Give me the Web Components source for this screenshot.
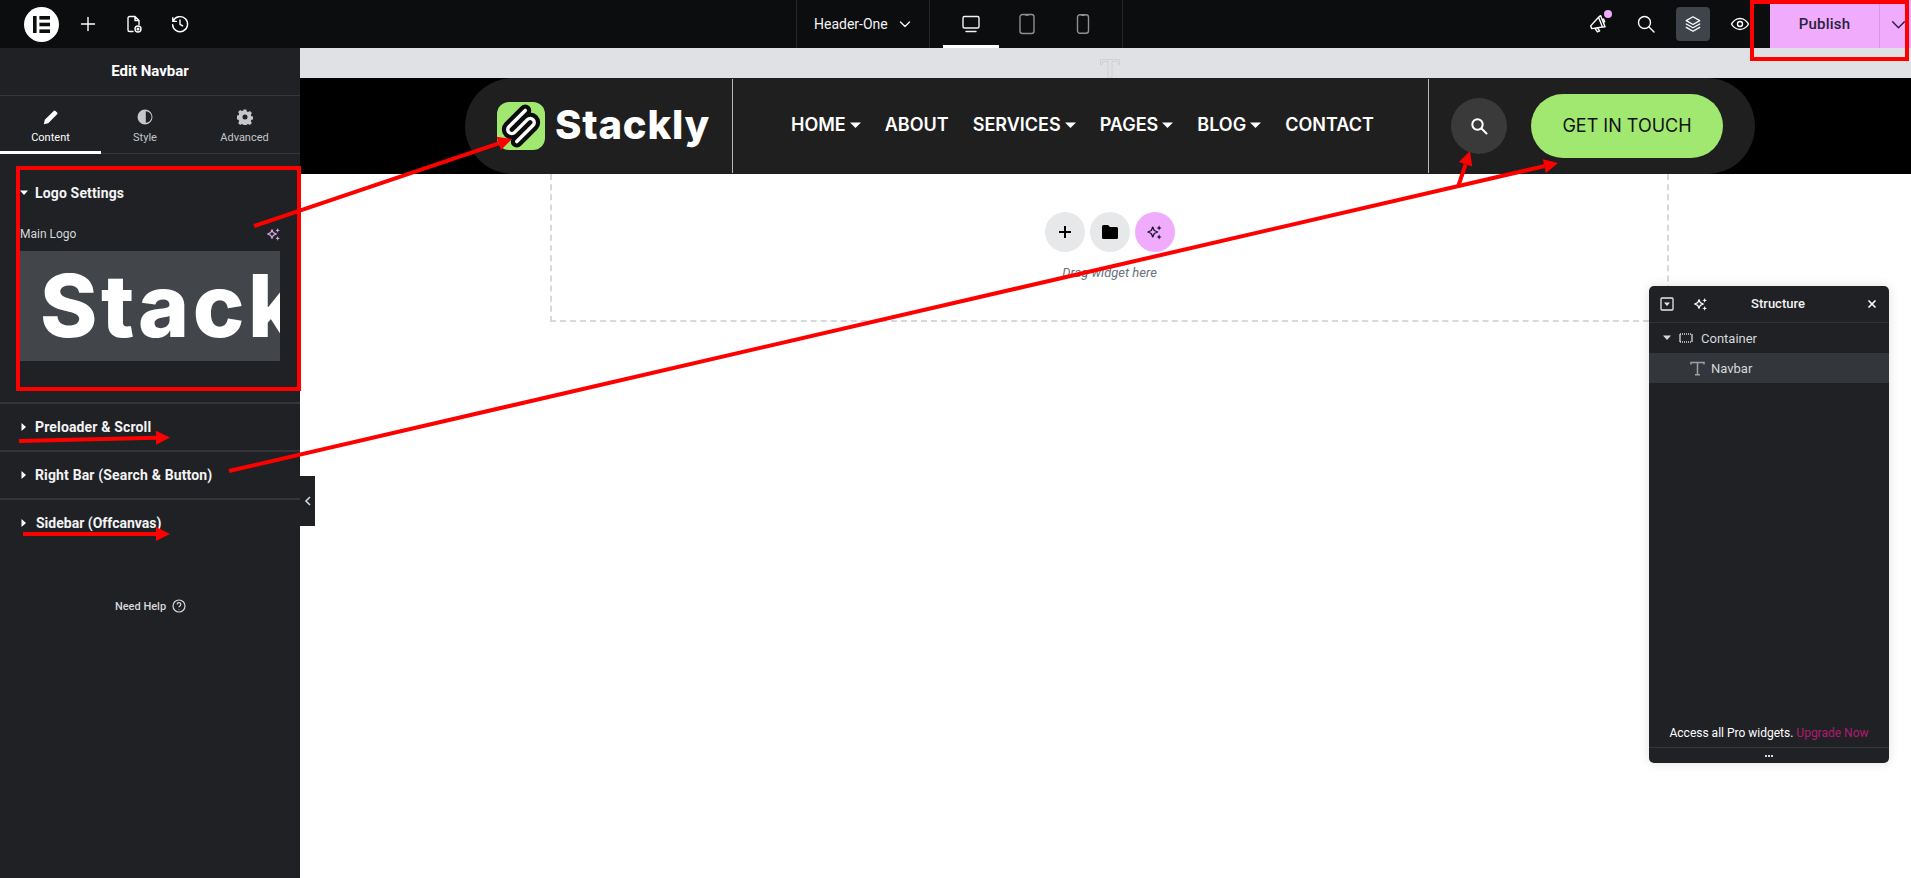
<!DOCTYPE html>
<html>
<head>
<meta charset="utf-8">
<title>Edit Navbar</title>
<style>
  html, body { margin: 0; height: 100%; overflow: hidden; background: #fff; font-family: Roboto, sans-serif; }
  .page { position: relative; width: 1911px; height: 878px; display: flex; flex-direction: column; }
  .main { flex: 1; display: flex; min-height: 0; }
</style>
</head>
<body>
<div class="page">
  <top-bar></top-bar>
  <div class="main">
    <edit-panel>
      <panel-section open label="Logo Settings"><logo-control></logo-control></panel-section>
      <panel-section label="Preloader &amp; Scroll"></panel-section>
      <panel-section label="Right Bar (Search &amp; Button)"></panel-section>
      <panel-section last label="Sidebar (Offcanvas)"></panel-section>
    </edit-panel>
    <canvas-area>
      <site-navbar></site-navbar>
      <drop-zone></drop-zone>
    </canvas-area>
  </div>
  <structure-panel></structure-panel>
  <red-notes></red-notes>
</div>

<script>
const sparkle = `<path d="M9 5.500 11 10l4.500 2-4.500 2-2 4.500L7 14l-4.500-2L7 10z" fill="none" stroke="currentColor" stroke-width="1.800" stroke-linejoin="round"/><path d="M17.500 3l1 2.500 2.500 1-2.500 1-1 2.500-1-2.500-2.500-1 2.500-1zM17.500 15l1 2.500 2.500 1-2.500 1-1 2.500-1-2.500-2.500-1 2.500-1z" fill="currentColor"/>`

customElements.define('top-bar', class extends HTMLElement {
  constructor () {
    super()
    this.attachShadow({ mode: 'open' })
    this.shadowRoot.innerHTML = `
<style>
  :host { display: flex; height: 48px; flex: none; background: #0c0d0e; color: #fff; font-family: Roboto, sans-serif; position: relative; }
  svg { display: block; fill: none; stroke: currentColor; stroke-width: 1.4; stroke-linecap: round; stroke-linejoin: round; }
  .left { width: 796px; display: flex; align-items: center; padding-left: 24px; box-sizing: border-box; }
  .logo { width: 35px; height: 35px; border-radius: 50%; background: #fff; display: grid; place-items: center; margin-right: 19px; }
  .logo svg { stroke: none; fill: #0c0d0e; }
  .left .ic { width: 20px; margin-right: 26px; }
  .doc { width: 134px; border-left: 1px solid #26282b; border-right: 1px solid #26282b; box-sizing: border-box; display: flex; align-items: center; padding-left: 17px; font-size: 14px; gap: 10px; color: #f3f3f4; }
  .devices { width: 193px; border-right: 1px solid #26282b; box-sizing: border-box; display: flex; padding-left: 13px; }
  .dev { width: 56px; display: grid; place-items: center; color: #8c8f94; box-sizing: border-box; }
  .dev.on { color: #f3f3f4; border-bottom: 3px solid #fff; padding-top: 3px; }
  .right { flex: 1; display: flex; align-items: center; justify-content: flex-end; }
  .tools { display: flex; align-items: center; }
  .t { width: 34px; height: 34px; display: grid; place-items: center; border-radius: 4px; margin-right: 13px; position: relative; }
  .t:first-child { margin-right: 14px; }
  .t.on { background: #3f444b; }
  .dot { position: absolute; width: 8px; height: 8px; border-radius: 50%; background: #f0abfc; top: 3px; left: 23px; }
  .publish { height: 48px; display: flex; background: #f0abfc; color: #2a2140; font-size: 15px; font-weight: 500; letter-spacing: .2px; margin-left: 13px; }
  .publish b { font-weight: 500; width: 109px; display: grid; place-items: center; border-right: 1px solid #db94e6; }
  .publish i { width: 31px; display: grid; place-items: center; padding-left: 6px; box-sizing: border-box; }
</style>
<div class="left">
  <div class="logo"><svg width="17" height="17" viewBox="0 0 17 17"><rect x="0" y="0" width="3.600" height="17"/><rect x="6.400" y="0" width="10.600" height="3.600"/><rect x="6.400" y="6.700" width="10.600" height="3.600"/><rect x="6.400" y="13.400" width="10.600" height="3.600"/></svg></div>
  <div class="ic"><svg width="20" height="20" viewBox="0 0 20 20"><path d="M10 3.500v13M3.500 10h13"/></svg></div>
  <div class="ic"><svg width="20" height="20" viewBox="0 0 20 20"><path d="M9 17.500H5.500a1.500 1.500 0 0 1-1.500-1.500V4a1.500 1.500 0 0 1 1.500-1.500h5.500l4 4v4M11 2.500v4h4"/><circle cx="14" cy="15" r="3"/><circle cx="14" cy="15" r=".8"/></svg></div>
  <div class="ic"><svg width="20" height="20" viewBox="0 0 20 20"><path d="M3.200 7.200a7.500 7.500 0 1 1-.6 3.400M2.800 3.800v3.600h3.600M10 6v4.300l2.600 1.600"/></svg></div>
</div>
<div class="doc"><span>Header-One</span><svg width="14" height="14" viewBox="0 0 14 14"><path d="M2.500 5l4.500 4.500L11.500 5"/></svg></div>
<div class="devices">
  <div class="dev on"><svg width="20" height="20" viewBox="0 0 20 20" stroke-width="1.500"><rect x="2" y="2.500" width="16" height="11.500" rx="1.500"/><path d="M5 17.500h10"/></svg></div>
  <div class="dev"><svg width="18" height="22" viewBox="0 0 18 22"><rect x="2" y="1.500" width="14" height="19" rx="2.500"/><path d="M7.500 2h3"/></svg></div>
  <div class="dev"><svg width="14" height="20" viewBox="0 0 14 20"><rect x="1.500" y=".8" width="11" height="18.400" rx="2.500"/><path d="M5.500 1.200h3"/></svg></div>
</div>
<div class="right">
  <div class="tools">
    <div class="t"><svg width="20" height="20" viewBox="0 0 20 20" style="transform:rotate(-22deg)"><path d="M2.500 9 13 4v10.500L2.500 12zM13 4l2.500-.8v12l-2.500-.7M5.500 12.700l1 4.300h2.500l-1-3.800M15.500 7.500h1.500v3h-1.500"/></svg><span class="dot"></span></div>
    <div class="t"><svg width="20" height="20" viewBox="0 0 20 20"><circle cx="8.500" cy="8.500" r="6"/><path d="m13 13 5 5"/></svg></div>
    <div class="t on"><svg width="18" height="18" viewBox="0 0 20 20"><path d="M10 2 2.500 6.300 10 10.500l7.500-4.200zM2.500 10 10 14.200 17.500 10M2.500 13.700 10 18l7.500-4.300"/></svg></div>
    <div class="t" style="margin-right:0"><svg width="20" height="20" viewBox="0 0 20 20"><path d="M1.500 10S4.500 4.500 10 4.500 18.500 10 18.500 10 15.500 15.500 10 15.500 1.500 10 1.500 10z"/><circle cx="10" cy="10" r="2.500"/></svg></div>
  </div>
  <div class="publish"><b>Publish</b><i><svg width="17" height="17" viewBox="0 0 16 16" stroke-width="1.500"><path d="M2.500 5.500 8 11l5.500-5.500"/></svg></i></div>
</div>`
  }
})

customElements.define('edit-panel', class extends HTMLElement {
  constructor () {
    super()
    this.attachShadow({ mode: 'open' })
    this.shadowRoot.innerHTML = `
<style>
  :host { display: flex; flex-direction: column; width: 300px; flex: none; background: #1f2124; color: #fff; font-family: Roboto, sans-serif; position: relative; z-index: 1; }
  .title { height: 48px; box-sizing: border-box; padding-bottom: 2px; display: grid; place-items: center; font-size: 15px; font-weight: 700; border-bottom: 1px solid #35373b; }
  .tabs { display: grid; grid-template-columns: 101px 88px 111px; height: 58px; box-sizing: border-box; border-bottom: 1px solid #35373b; }
  .tab { display: flex; flex-direction: column; align-items: center; padding-top: 13px; font-size: 11px; gap: 6px; color: #c5c7ca; box-sizing: border-box; height: 58px; }
  .tab.on { color: #fff; border-bottom: 3px solid #fff; }
  .tab svg { display: block; fill: currentColor; }
  .help { display: flex; justify-content: center; align-items: center; gap: 6px; font-size: 11px; font-weight: 500; color: #d5d8dc; margin-top: 24px; padding-left: 1px; height: 14px; }
  .help svg { fill: none; stroke: currentColor; }
  .toggle { position: absolute; left: 300px; top: 428px; width: 15px; height: 50px; background: #1f2124; display: grid; place-items: center; }
  .toggle svg { fill: none; stroke: #d5d8dc; stroke-width: 1.600; }
</style>
<div class="title">Edit Navbar</div>
<div class="tabs">
  <div class="tab on"><svg width="16" height="16" viewBox="0 0 16 16"><path d="M.8 15.200l1-4.400L10.700 1.900a1.200 1.200 0 0 1 1.700 0l1.700 1.700a1.200 1.200 0 0 1 0 1.700L5.200 14.200z"/></svg>Content</div>
  <div class="tab"><svg width="16" height="16" viewBox="0 0 16 16"><path fill-rule="evenodd" d="M8 .5a7.500 7.500 0 1 1 0 15 7.500 7.500 0 0 1 0-15zM8.800 2.300v11.400a5.700 5.700 0 0 0 0-11.400z"/></svg>Style</div>
  <div class="tab"><svg width="16" height="16" viewBox="0 0 16 16"><path fill-rule="evenodd" d="M6.600.5h2.800l.4 2 1.300.6 1.800-1 2 2-1.100 1.700.6 1.400 2 .4v2.800l-2 .4-.6 1.400 1.100 1.700-2 2-1.800-1-1.300.6-.4 2H6.600l-.4-2-1.300-.6-1.800 1-2-2 1.100-1.700-.6-1.400-2-.4V6.600l2-.4.6-1.400L1.100 3.100l2-2 1.800 1 1.300-.6zM8 5.500a2.500 2.500 0 1 0 0 5 2.500 2.500 0 0 0 0-5z"/></svg>Advanced</div>
</div>
<slot></slot>
<div class="help"><span>Need Help</span><svg width="14" height="14" viewBox="0 0 14 14" stroke-width="1.200"><circle cx="7" cy="7" r="6"/><path d="M5.200 5.500a1.800 1.800 0 1 1 2.700 1.500c-.6.400-.9.700-.9 1.300M7 10v.5"/></svg></div>
<div class="toggle"><svg width="8" height="12" viewBox="0 0 8 12"><path d="M6 2 2 6l4 4"/></svg></div>`
  }
})

customElements.define('panel-section', class extends HTMLElement {
  constructor () {
    super()
    this.attachShadow({ mode: 'open' })
    const open = this.hasAttribute('open')
    const tri = open ? '<path d="M0 1.500h8L4 6z"/>' : '<path d="M1.500 0v8L6 4z"/>'
    this.shadowRoot.innerHTML = `
<style>
  :host { display: block; border-bottom: 2px solid #33353a; box-sizing: border-box; font-family: Roboto, sans-serif; }
  :host([last]) { border-bottom: 0; height: 75px; }
  :host([open]) { height: 250px; padding-top: 17px; }
  .head { height: 46px; display: flex; align-items: center; font-size: 14px; font-weight: 700; letter-spacing: .15px; color: #f3f3f4; padding-left: 35px; position: relative; white-space: nowrap; }
  :host([open]) .head { height: 44px; }
  :host([last]) .head { padding-left: 36px; letter-spacing: 0; }
  svg { position: absolute; left: 20px; top: 50%; margin-top: -4px; fill: #fff; }
</style>
<div class="head"><svg width="8" height="8" viewBox="0 0 8 8">${tri}</svg>${this.getAttribute('label')}</div>
<slot></slot>`
  }
})

customElements.define('logo-control', class extends HTMLElement {
  constructor () {
    super()
    this.attachShadow({ mode: 'open' })
    this.shadowRoot.innerHTML = `
<style>
  :host { display: block; padding: 10px 20px 0; font-family: Roboto, sans-serif; }
  .row { display: flex; justify-content: space-between; align-items: center; font-size: 12px; color: #d5d8dc; height: 18px; }
  .row svg { color: #d8a6ea; display: block; margin-right: -2px; }
  .img { margin-top: 8px; height: 110px; background: #42454a; overflow: hidden; padding-left: 20px; box-sizing: border-box; font: 800 87px/110px Inter, sans-serif; letter-spacing: 3.500px; color: #fff; white-space: nowrap; }
</style>
<div class="row"><span>Main Logo</span><svg width="16" height="16" viewBox="0 0 24 24">${sparkle}</svg></div>
<div class="img">Stack</div>`
  }
})

customElements.define('canvas-area', class extends HTMLElement {
  constructor () {
    super()
    this.attachShadow({ mode: 'open' })
    this.shadowRoot.innerHTML = `
<style>
  :host { display: block; flex: 1; background: #fff; min-width: 0; }
  .grab { height: 30px; box-sizing: border-box; background: #dfe1e5; padding: 11px 0 0 800px; overflow: hidden; }
  .grab svg { display: block; }
</style>
<div class="grab"><svg width="20" height="19" viewBox="0 0 20 19" fill="none" stroke="#cdd0d4"><path d="M.5 5.500V.5h19v5h-1l-1-3H12V19H8V2.500H3l-1 3z"/></svg></div>
<slot></slot>`
  }
})

customElements.define('site-navbar', class extends HTMLElement {
  constructor () {
    super()
    this.attachShadow({ mode: 'open' })
    const caret = '<svg width="11" height="6" viewBox="0 0 11 6"><path d="M0 .5h11L5.500 6z" fill="#fff"/></svg>'
    const items = [['HOME', 1], ['ABOUT', 0], ['SERVICES', 1], ['PAGES', 1], ['BLOG', 1], ['CONTACT', 0]]
    this.shadowRoot.innerHTML = `
<style>
  :host { display: block; height: 96px; background: #000; padding-left: 165px; font-family: Inter, sans-serif; }
  .pill { width: 1290px; height: 96px; background: #1f1f1f; border-radius: 48px; display: flex; align-items: stretch; color: #fff; }
  .brand { width: 268px; display: flex; align-items: center; gap: 10px; padding-left: 32px; box-sizing: border-box; border-right: 1px solid #b8b8b8; margin: 1px 0; }
  .brand svg { display: block; }
  .brand span { font: 800 40px/1 Inter, sans-serif; letter-spacing: .8px; padding-bottom: 2px; }
  nav { width: 696px; display: flex; align-items: center; gap: 24px; padding: 0 0 3px 58px; box-sizing: border-box; border-right: 1px solid #b8b8b8; margin: 1px 0; font-size: 18px; font-weight: 600; }
  nav a { display: flex; align-items: center; gap: 4px; }
  .search { width: 56px; height: 56px; border-radius: 50%; background: #3a3a3a; display: grid; place-items: center; margin: 20px 24px 0 22px; }
  .btn { width: 192px; height: 64px; margin-top: 16px; border-radius: 32px; background: #a0e870; color: #111; display: grid; place-items: center; font-size: 18px; font-weight: 400; padding-bottom: 1px; box-sizing: border-box; }
</style>
<div class="pill">
  <div class="brand">
    <svg width="48" height="48" viewBox="0 0 48 48">
      <rect width="48" height="48" rx="12" fill="#a0e870"/>
      <g transform="translate(24 24) rotate(-45)" fill="none" stroke-linecap="round" stroke-linejoin="round">
        <path d="M14-8H-9A4 4 0 0 0-9 0H9A4 4 0 0 1 9 8H-14" stroke="#0c0c0c" stroke-width="12"/>
        <path d="M14-8H-9A4 4 0 0 0-9 0H9A4 4 0 0 1 9 8H-14" stroke="#fff" stroke-width="3.500"/>
      </g>
    </svg>
    <span>Stackly</span>
  </div>
  <nav>${items.map(([t, c]) => `<a>${t}${c ? caret : ''}</a>`).join('')}</nav>
  <div class="search"><svg width="18" height="18" viewBox="0 0 18 18" fill="none" stroke="#fff" stroke-width="2" stroke-linecap="round"><circle cx="7.500" cy="7.500" r="5.200"/><path d="m11.500 11.500 5 5"/></svg></div>
  <div class="btn">GET IN TOUCH</div>
</div>`
  }
})

customElements.define('drop-zone', class extends HTMLElement {
  constructor () {
    super()
    this.attachShadow({ mode: 'open' })
    this.shadowRoot.innerHTML = `
<style>
  :host { display: flex; flex-direction: column; align-items: center; width: 1119px; height: 148px; margin-left: 250px; box-sizing: border-box; border: 2px dashed #d5d8dc; border-top: 0; padding-top: 38px; font-family: Roboto, sans-serif; }
  .btns { display: flex; gap: 5px; }
  .b { width: 40px; height: 40px; border-radius: 50%; background: #e6e8ea; display: grid; place-items: center; color: #000; }
  .b.ai { background: #f0abfc; color: #1b1533; }
  svg { display: block; }
  p { margin: 13px 0 0; font-size: 13px; font-style: italic; color: #69727d; }
</style>
<div class="btns">
  <div class="b"><svg width="14" height="14" viewBox="0 0 14 14"><path d="M7 1v12M1 7h12" stroke="currentColor" stroke-width="2"/></svg></div>
  <div class="b"><svg width="16" height="14" viewBox="0 0 16 14"><path d="M1.500 0h4.500l2 2h6.500A1.500 1.500 0 0 1 16 3.500v9a1.500 1.500 0 0 1-1.500 1.500h-13A1.500 1.500 0 0 1 0 12.500v-11A1.500 1.500 0 0 1 1.500 0z" fill="currentColor"/></svg></div>
  <div class="b ai"><svg width="18" height="18" viewBox="0 0 24 24">${sparkle}</svg></div>
</div>
<p>Drag widget here</p>`
  }
})

customElements.define('structure-panel', class extends HTMLElement {
  constructor () {
    super()
    this.attachShadow({ mode: 'open' })
    this.shadowRoot.innerHTML = `
<style>
  :host { position: absolute; left: 1649px; top: 286px; width: 240px; height: 477px; display: flex; flex-direction: column; background: #1f2124; border-radius: 5px; box-shadow: 0 0 12px rgba(0,0,0,.12); color: #d5d8dc; font-family: Roboto, sans-serif; font-size: 13px; }
  svg { display: block; }
  .head { height: 37px; flex: none; box-sizing: border-box; border-bottom: 1px solid #2f3135; display: flex; align-items: center; padding: 0 11px 1px; color: #fff; }
  .head .t { flex: 1; text-align: center; padding-right: 19px; font-size: 13px; font-weight: 500; color: #f3f3f4; }
  .sq { margin-right: 19px; }
  .row { height: 30px; display: flex; align-items: center; }
  .row.sel { background: #33363a; }
  .tri { margin: 0 8px 0 14px; fill: #d5d8dc; }
  .c { margin-right: 8px; }
  .body { flex: 1; }
  .foot { height: 32px; flex: none; padding-top: 8px; text-align: center; font-size: 12px; color: #fff; line-height: 20px; box-sizing: border-box; }
  .foot em { font-style: normal; color: #b01b70; }
  .more { height: 15px; flex: none; border-top: 1px solid #35373b; display: grid; place-items: center; }
  .more i { display: block; width: 8px; height: 2px; background: repeating-linear-gradient(90deg, #d5d8dc 0 2px, transparent 2px 3px); }
</style>
<div class="head">
  <svg class="sq" width="14" height="14" viewBox="0 0 14 14" fill="none" stroke="#e6e8ea" stroke-width="1.300"><rect x="1" y="1" width="12" height="12" rx="1"/><path d="M4 5.500h6L7 9z" fill="#e6e8ea" stroke="none"/></svg>
  <svg width="16" height="16" viewBox="0 0 24 24">${sparkle}</svg>
  <span class="t">Structure</span>
  <svg width="12" height="12" viewBox="0 0 12 12" stroke="#fff" stroke-width="1.600"><path d="M2.500 2.500l7 7M9.500 2.500l-7 7"/></svg>
</div>
<div class="row">
  <svg class="tri" width="8" height="8" viewBox="0 0 8 8"><path d="M0 1.500h8L4 6z"/></svg>
  <svg class="c" width="14" height="12" viewBox="0 0 14 12" fill="none" stroke="#d5d8dc" stroke-width="1.300"><path d="M1 2h12M1 10h12" stroke-dasharray="1 1"/><path d="M1 2v8M13 2v8"/></svg>
  <span>Container</span>
</div>
<div class="row sel">
  <svg style="margin:0 6px 0 41px" width="15" height="15" viewBox="0 0 15 15" fill="none" stroke="#9da1a6" stroke-width="1.500"><path d="M1 3.500V1.500h13v2M7.500 1.500v12M5 13.800h5"/></svg>
  <span>Navbar</span>
</div>
<div class="body"></div>
<div class="foot">Access all Pro widgets. <em>Upgrade Now</em></div>
<div class="more"><i></i></div>`
  }
})

// hand drawn notes on top of the screenshot, coordinates are the page's own
customElements.define('red-notes', class extends HTMLElement {
  constructor () {
    super()
    this.attachShadow({ mode: 'open' })
    const arrows = [
      [254, 226, 512, 139],
      [229, 471, 1558, 163],
      [1458, 187, 1470, 151],
      [19, 441, 170, 437.500],
      [23, 534, 170, 534]
    ]
    const shapes = arrows.map(([x1, y1, x2, y2]) => {
      const a = Math.atan2(y2 - y1, x2 - x1)
      const ux = Math.cos(a); const uy = Math.sin(a)
      const bx = x2 - ux * 14; const by = y2 - uy * 14
      return `<path d="M${x1} ${y1}L${bx} ${by}" stroke="#f00" stroke-width="4"/>` +
        `<path d="M${x2} ${y2}L${bx - uy * 7} ${by + ux * 7}L${bx + uy * 7} ${by - ux * 7}z" fill="#f00"/>`
    }).join('')
    this.shadowRoot.innerHTML = `
<style>
  :host { position: absolute; left: 0; top: 0; width: 1911px; height: 878px; pointer-events: none; z-index: 5; }
  svg { display: block; }
</style>
<svg width="1911" height="878" viewBox="0 0 1911 878" fill="none">
  <rect x="18" y="168" width="281" height="221" stroke="#f00" stroke-width="4"/>
  <rect x="1752" y="2" width="155" height="57" stroke="#f00" stroke-width="4"/>
  ${shapes}
</svg>`
  }
})
</script>
</body>
</html>
